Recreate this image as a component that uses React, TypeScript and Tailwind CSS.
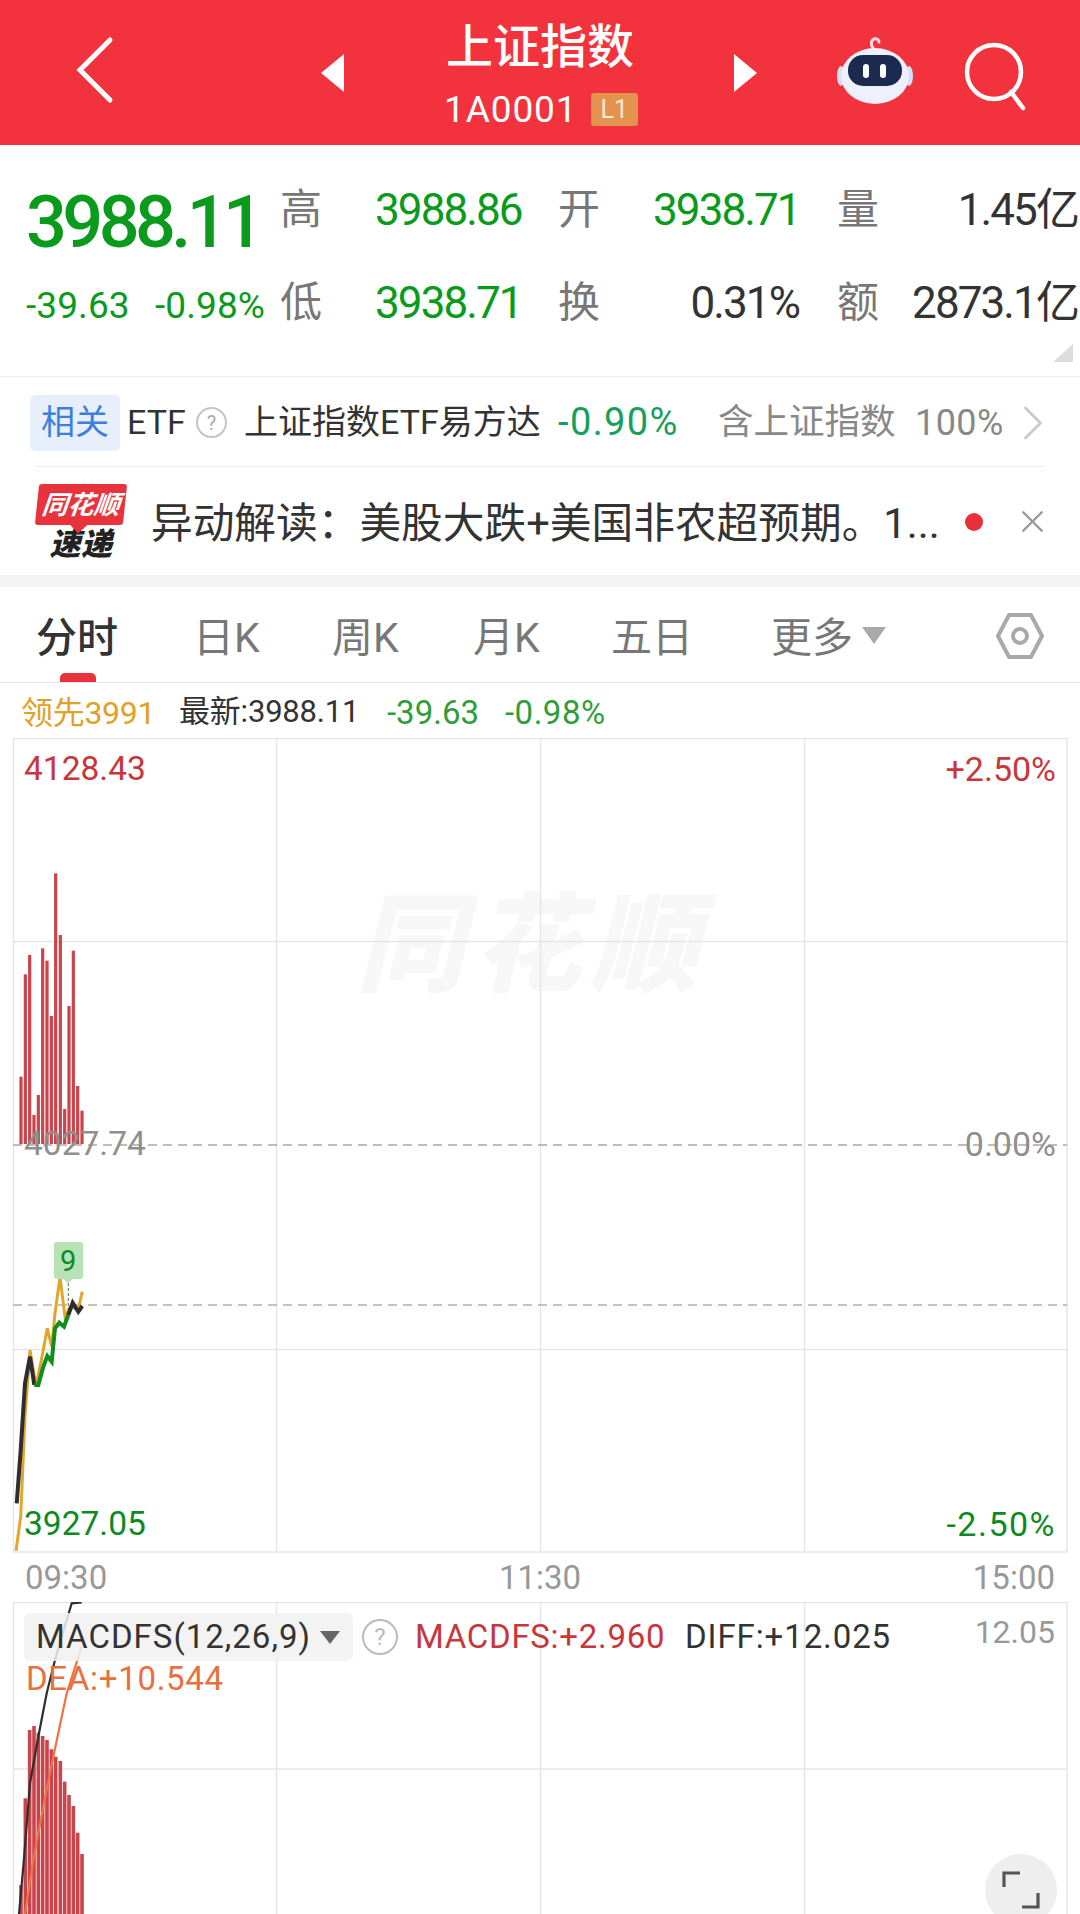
import { ChevronRight, X } from "lucide-react";

const cjk = "font-['Roboto','Noto_Sans_CJK_SC',sans-serif]";

const volumeBars = [
  [63, 710], [76, 403], [89, 345], [102, 825], [115, 765], [128, 325], [141, 362], [154, 528],
  [167, 100], [181, 285], [194, 807], [207, 498], [220, 332], [233, 738], [246, 812],
];

const macdBars = [
  [63, 1005], [76, 745], [89, 540], [102, 528], [115, 548], [128, 558], [141, 570], [154, 598],
  [167, 620], [181, 633], [194, 695], [207, 735], [220, 768], [233, 848], [246, 912],
];

// traced from the chart, in zoomed pixels
const toMain = (pts: number[][]) => pts.map(([x, y]) => `${(x / 3).toFixed(1)},${(1200 + y / 3).toFixed(1)}`).join(" ");
const toMacd = (pts: number[][]) => pts.map(([x, y]) => `${(x / 3).toFixed(1)},${(1550 + y / 3).toFixed(1)}`).join(" ");

function Header() {
  return (
    <header className="flex h-[145px] items-start bg-[#f2333d] text-white">
      <svg width="44" height="72" viewBox="0 0 44 72" className="ml-[73px] mt-[34px] shrink-0">
        <path d="M37 6 7 36l30 30" fill="none" stroke="#fff" strokeWidth="5" strokeLinecap="round" />
      </svg>
      <svg width="24" height="38" viewBox="0 0 24 38" className="ml-[204px] mt-[54px] shrink-0">
        <path d="M23 0 0 19l23 19z" fill="#fff" />
      </svg>
      <div className="ml-[101px] flex w-[192px] shrink-0 flex-col">
        <div className="mt-[21px] h-[52px] text-[47px] leading-[52px] font-medium">上证指数</div>
        <div className="mt-[20px] flex items-center">
          <span className="-ml-[2px] text-[37px] leading-[32px] tracking-[0.9px]">1A0001</span>
          <span className="ml-[13px] flex h-[33px] w-[48px] items-center justify-center rounded-[3px] bg-[#e2934d] text-[25px] leading-none text-[#fbe9d6]">
            L1
          </span>
        </div>
      </div>
      <svg width="24" height="38" viewBox="0 0 24 38" className="ml-[96px] mt-[54px] shrink-0">
        <path d="M0 0l23 19L0 38z" fill="#fff" />
      </svg>
      <svg width="78" height="70" viewBox="0 0 78 70" className="ml-[78px] mt-[36px] shrink-0">
        <path d="M38 14c-3-4-4-9 0-11 3-1 5 1 5 3" fill="none" stroke="#f5dfe6" strokeWidth="3" strokeLinecap="round" />
        <ellipse cx="5" cy="40" rx="4" ry="10" fill="#cfe0f7" />
        <ellipse cx="73" cy="40" rx="4" ry="10" fill="#cfe0f7" />
        <ellipse cx="39" cy="40" rx="34" ry="28" fill="#eef0fb" />
        <rect x="12" y="19" width="54" height="31" rx="15" fill="#1c2a4f" />
        <rect x="27" y="28" width="6" height="14" rx="3" fill="#fff" />
        <rect x="44" y="28" width="6" height="14" rx="3" fill="#fff" />
      </svg>
      <svg width="64" height="72" viewBox="0 0 64 72" className="ml-[49px] mt-[40px] shrink-0">
        <circle cx="31" cy="32" r="27" fill="none" stroke="#fff" strokeWidth="4.5" />
        <path d="m48 52 12 16" fill="none" stroke="#fff" strokeWidth="4.5" strokeLinecap="round" />
      </svg>
    </header>
  );
}

function Stats() {
  const label = "text-[42px] leading-[48px] text-[#777]";
  const value = "text-[44px] leading-[48px] tracking-[-1.9px]";
  return (
    <section className="relative flex h-[232px] border-b border-[#eeeeee] pl-[26px]">
      <div className="w-[254px] shrink-0">
        <div className="mt-[42px] h-[72px] text-[72px] leading-[72px] font-medium tracking-[-4.6px] whitespace-nowrap text-[#0a9a1c]">3988.11</div>
        <div className="mt-[27px] flex text-[37px] leading-[40px] tracking-[0.1px] whitespace-nowrap text-[#0a9a1c]">
          <span className="w-[129px]">-39.63</span>
          <span>-0.98%</span>
        </div>
      </div>
      <div className="mt-[41px] grid h-[141px] w-[798px] grid-cols-[95px_183px_95px_146px_38px_241px] grid-rows-[48px_48px] gap-y-[45px]">
        <span className={label}>高</span>
        <span className={`${value} text-[#0a9a1c]`}>3988.86</span>
        <span className={label}>开</span>
        <span className={`${value} text-right text-[#0a9a1c]`}>3938.71</span>
        <span />
        <span className={`${value} flex justify-between text-[#333]`}>
          <span className={label + " tracking-normal"}>量</span>
          <span>1.45亿</span>
        </span>
        <span className={label}>低</span>
        <span className={`${value} text-[#0a9a1c]`}>3938.71</span>
        <span className={label}>换</span>
        <span className={`${value} text-right text-[#333]`}>0.31%</span>
        <span />
        <span className={`${value} flex justify-between text-[#333]`}>
          <span className={label + " tracking-normal"}>额</span>
          <span>2873.1亿</span>
        </span>
      </div>
      <svg width="20" height="18" viewBox="0 0 20 18" className="absolute right-[7px] bottom-[14px]">
        <path d="M20 0v18H0z" fill="#dcdcdc" />
      </svg>
    </section>
  );
}

function RelatedRow() {
  return (
    <div className="mx-[36px] flex h-[90px] items-center border-b border-[#eeeeee] pt-[2px] text-[34px] whitespace-nowrap">
      <span className="-ml-[6px] flex h-[56px] w-[90px] shrink-0 items-center justify-center rounded-[5px] bg-[#e8effc] text-[#3d7fe0]">相关</span>
      <span className="ml-[7px] w-[60px] shrink-0 text-[#333]">ETF</span>
      <span className="ml-[9px] flex h-[31px] w-[31px] shrink-0 items-center justify-center rounded-full border-2 border-[#c4c4c4] text-[20px] leading-none text-[#aaa]">?</span>
      <span className="ml-[17px] w-[314px] shrink-0 text-[#333]">上证指数ETF易方达</span>
      <span className="w-[160px] shrink-0 text-[38px] tracking-[1.4px] text-[#16a05c]">-0.90%</span>
      <span className="w-[178px] shrink-0 text-[35.5px] text-[#888]">含上证指数</span>
      <span className="ml-[19px] w-[88px] shrink-0 text-[36px] tracking-[0.4px] text-[#888]">100%</span>
      <ChevronRight className="shrink-0" size={60} strokeWidth={1.1} color="#c9c9c9" />
    </div>
  );
}

function NewsRow() {
  return (
    <div className="flex h-[108px] items-start pl-[37px]">
      <div className="mt-[17px] w-[88px] shrink-0">
        <div className="relative flex h-[41px] -skew-x-6 items-center justify-center rounded-[3px] bg-[#e8333c] text-[26px] leading-none font-bold text-white italic">
          同花顺
          <span className="absolute -bottom-[6px] left-[38px] h-[12px] w-[12px] rotate-45 bg-[#e8333c]" />
        </div>
        <div className="mt-[4px] text-center text-[31px] leading-[32px] font-black tracking-[0.5px] text-[#222] italic">速递</div>
      </div>
      <div className="ml-[26px] mt-[33px] w-[795px] shrink-0 overflow-hidden text-[41.7px] leading-[48px] whitespace-nowrap text-[#333]">
        异动解读：美股大跌+美国非农超预期。1...
      </div>
      <span className="absolute left-[965px] top-[513px] h-[18px] w-[18px] rounded-full bg-[#e8303a]" />
      <X className="absolute left-[1014px] top-[503px]" size={37} strokeWidth={1.6} color="#999" />
    </div>
  );
}

function Tabs() {
  const tab = "absolute top-[26px] text-[41px] leading-[50px] text-[#777]";
  return (
    <div className="relative h-[96px] border-b border-[#e6e6e6]">
      <span className="absolute top-[26px] left-[36px] text-[41px] leading-[50px] font-medium text-[#333]">分时</span>
      <span className="absolute bottom-0 left-[60px] h-[9px] w-[36px] rounded-t-[5px] bg-[#e8333c]" />
      <span className={`${tab} left-[193px]`}>日K</span>
      <span className={`${tab} left-[332px]`}>周K</span>
      <span className={`${tab} left-[473px]`}>月K</span>
      <span className={`${tab} left-[611px]`}>五日</span>
      <span className={`${tab} left-[771px]`}>更多</span>
      <svg width="24" height="17" viewBox="0 0 24 17" className="absolute left-[862px] top-[40px]">
        <path d="M0 0h24L12 17z" fill="#aaa" />
      </svg>
      <svg width="48" height="46" viewBox="0 0 48 46" className="absolute left-[996px] top-[26px]">
        <path d="M13 2h22l11 21-11 21H13L2 23z" fill="none" stroke="#a9a9a9" strokeWidth="4" strokeLinejoin="round" />
        <circle cx="24" cy="23" r="7" fill="none" stroke="#a9a9a9" strokeWidth="4" />
      </svg>
    </div>
  );
}

function Legend() {
  return (
    <div className="flex h-[55px] items-center pt-[4px] pl-[21px]">
      <span className="w-[158px] shrink-0 text-[32px] tracking-[-0.3px] text-[#e0a126]">领先3991</span>
      <span className="w-[208px] shrink-0 text-[31px] tracking-[-0.2px] text-[#333]">最新:3988.11</span>
      <span className="w-[118px] shrink-0 text-[33px] text-[#2f9e3a]">-39.63</span>
      <span className="text-[33px] tracking-[0.5px] text-[#2f9e3a]">-0.98%</span>
    </div>
  );
}

function MainChart() {
  const left = "absolute left-[24px] text-[33.5px] leading-none";
  const right = "absolute right-[24px] text-[34px] leading-none";
  return (
    <div className="relative h-[815px] overflow-hidden">
      <div className="absolute left-[356px] top-[143px] text-[108px] leading-[130px] font-black tracking-[9px] whitespace-nowrap text-[#f7f7f7] italic">
        同花顺
      </div>
      <svg width="1080" height="815" viewBox="0 738 1080 815" className="absolute inset-0">
        <g stroke="#e6e6e6" strokeWidth="1.5" fill="none">
          <path d="M13 738.5H1067M13 941.5H1067M13 1349.5H1067M13 1552H1067" />
          <path d="M13.5 738V1552M276.5 738V1552M540.5 738V1552M804.5 738V1552M1067 738V1552" />
        </g>
        {volumeBars.map(([x, y]) => (
          <rect key={x} x={x / 3 - 1.6} y={840 + y / 3} width="3.2" height={1144 - (840 + y / 3)} fill="#c9454b" />
        ))}
        <path d="M13 1145H1067" stroke="#a8a8a8" strokeWidth="1.5" strokeDasharray="9 6" />
        <path d="M13 1305H1067" stroke="#bcae98" strokeWidth="1.5" strokeDasharray="9 6" />
        <polyline
          points={toMain([[48, 1052], [62, 950], [75, 650], [90, 450], [108, 558], [125, 475], [142, 385], [155, 440], [165, 340], [180, 232], [195, 350], [210, 322], [235, 328], [247, 275]])}
          fill="none" stroke="#e5a52c" strokeWidth="3"
        />
        <path d="M68.3 1283V1310" stroke="#3c7a4a" strokeWidth="1" strokeDasharray="3 2" />
        <polyline points={toMain([[50, 910], [62, 750], [75, 550], [90, 470], [103, 555]])} fill="none" stroke="#2e2e2e" strokeWidth="4" />
        <polyline points={toMain([[103, 555], [115, 555], [130, 500], [142, 468], [155, 485], [165, 385], [178, 368], [192, 380], [205, 345]])} fill="none" stroke="#0d8f1d" strokeWidth="4" />
        <polyline points={toMain([[205, 345], [218, 308], [235, 335], [247, 318]])} fill="none" stroke="#2e2e2e" strokeWidth="4" />
        <path d="M57 1242h23a3 3 0 0 1 3 3v31a3 3 0 0 1-3 3h-7l-5 4-5-4H57a3 3 0 0 1-3-3v-31a3 3 0 0 1 3-3z" fill="#b7e2b8" />
      </svg>
      <span className="absolute left-[60px] top-[509px] text-[29px] leading-none text-[#0a8a1f]">9</span>
      <span className={`${left} top-[14px] text-[#c8363c]`}>4128.43</span>
      <span className={`${right} top-[14px] text-[#c8363c]`}>+2.50%</span>
      <span className={`${left} top-[389px] text-[#8f8f8f]`}>4027.74</span>
      <span className={`${right} top-[389px] text-[#8f8f8f]`}>0.00%</span>
      <span className={`${left} top-[769px] text-[#0d8a1f]`}>3927.05</span>
      <span className={`${right} top-[769px] tracking-[1.5px] text-[#0d8a1f]`}>-2.50%</span>
    </div>
  );
}

function TimeAxis() {
  return (
    <div className="flex h-[49px] items-center justify-between pr-[25px] pl-[25px] text-[33px] text-[#999]">
      <span>09:30</span>
      <span>11:30</span>
      <span>15:00</span>
    </div>
  );
}

function MacdChart() {
  return (
    <div className="relative h-[312px] overflow-hidden">
      <svg width="1080" height="312" viewBox="0 1602 1080 312" className="absolute inset-0">
        <g stroke="#e6e6e6" strokeWidth="1.5" fill="none">
          <path d="M13 1602.5H1067M13 1769H1067" />
          <path d="M13.5 1602V1914M276.5 1602V1914M540.5 1602V1914M804.5 1602V1914M1067 1602V1914" />
        </g>
        {macdBars.map(([x, y]) => (
          <rect key={x} x={x / 3 - 1.8} y={1550 + y / 3} width="3.6" height="320" fill="#c9454b" />
        ))}
        <polyline points={toMacd([[57, 1092], [70, 950], [90, 700], [115, 560], [140, 430], [165, 330], [215, 160], [245, 157]])} fill="none" stroke="#2e2e2e" strokeWidth="2.2" />
        <polyline points={toMacd([[75, 1092], [100, 930], [130, 770], [160, 620], [200, 430], [245, 290]])} fill="none" stroke="#ee7443" strokeWidth="2.2" />
      </svg>
      <div className="absolute left-[24px] top-[11px] flex h-[48px] w-[329px] items-center rounded-[6px] bg-[#f1f1f1]/85 pl-[12px] text-[33px] tracking-[1px] text-[#333]">
        MACDFS(12,26,9)
        <svg width="20" height="13" viewBox="0 0 20 13" className="absolute left-[296px] top-[18px]">
          <path d="M0 0h20L10 13z" fill="#666" />
        </svg>
      </div>
      <span className="absolute left-[362px] top-[17px] flex h-[36px] w-[36px] items-center justify-center rounded-full border-2 border-[#bbb] text-[24px] leading-none text-[#bbb]">?</span>
      <span className="absolute left-[415px] top-[15px] text-[33px] leading-[40px] tracking-[0.7px] text-[#c8363c]">MACDFS:+2.960</span>
      <span className="absolute left-[685px] top-[15px] text-[33px] leading-[40px] tracking-[0.9px] text-[#333]">DIFF:+12.025</span>
      <span className="absolute right-[25px] top-[10px] text-[32px] leading-[40px] text-[#999]">12.05</span>
      <span className="absolute left-[26px] top-[57px] text-[33px] leading-[40px] tracking-[0.7px] text-[#e8703f]">DEA:+10.544</span>
      <div className="absolute left-[985px] top-[252px] h-[72px] w-[72px] rounded-full bg-[#eeeeee]">
        <svg width="40" height="40" viewBox="0 0 40 40" className="absolute left-[16px] top-[16px]">
          <path d="M3 17V3h16M37 23v14H21" fill="none" stroke="#555" strokeWidth="3.2" />
        </svg>
      </div>
    </div>
  );
}

export default function App() {
  return (
    <div className={`relative h-[1914px] w-[1080px] overflow-hidden bg-white ${cjk}`}>
      <Header />
      <Stats />
      <RelatedRow />
      <NewsRow />
      <div className="h-[12px] bg-[#f3f3f3]" />
      <Tabs />
      <Legend />
      <MainChart />
      <TimeAxis />
      <MacdChart />
    </div>
  );
}
